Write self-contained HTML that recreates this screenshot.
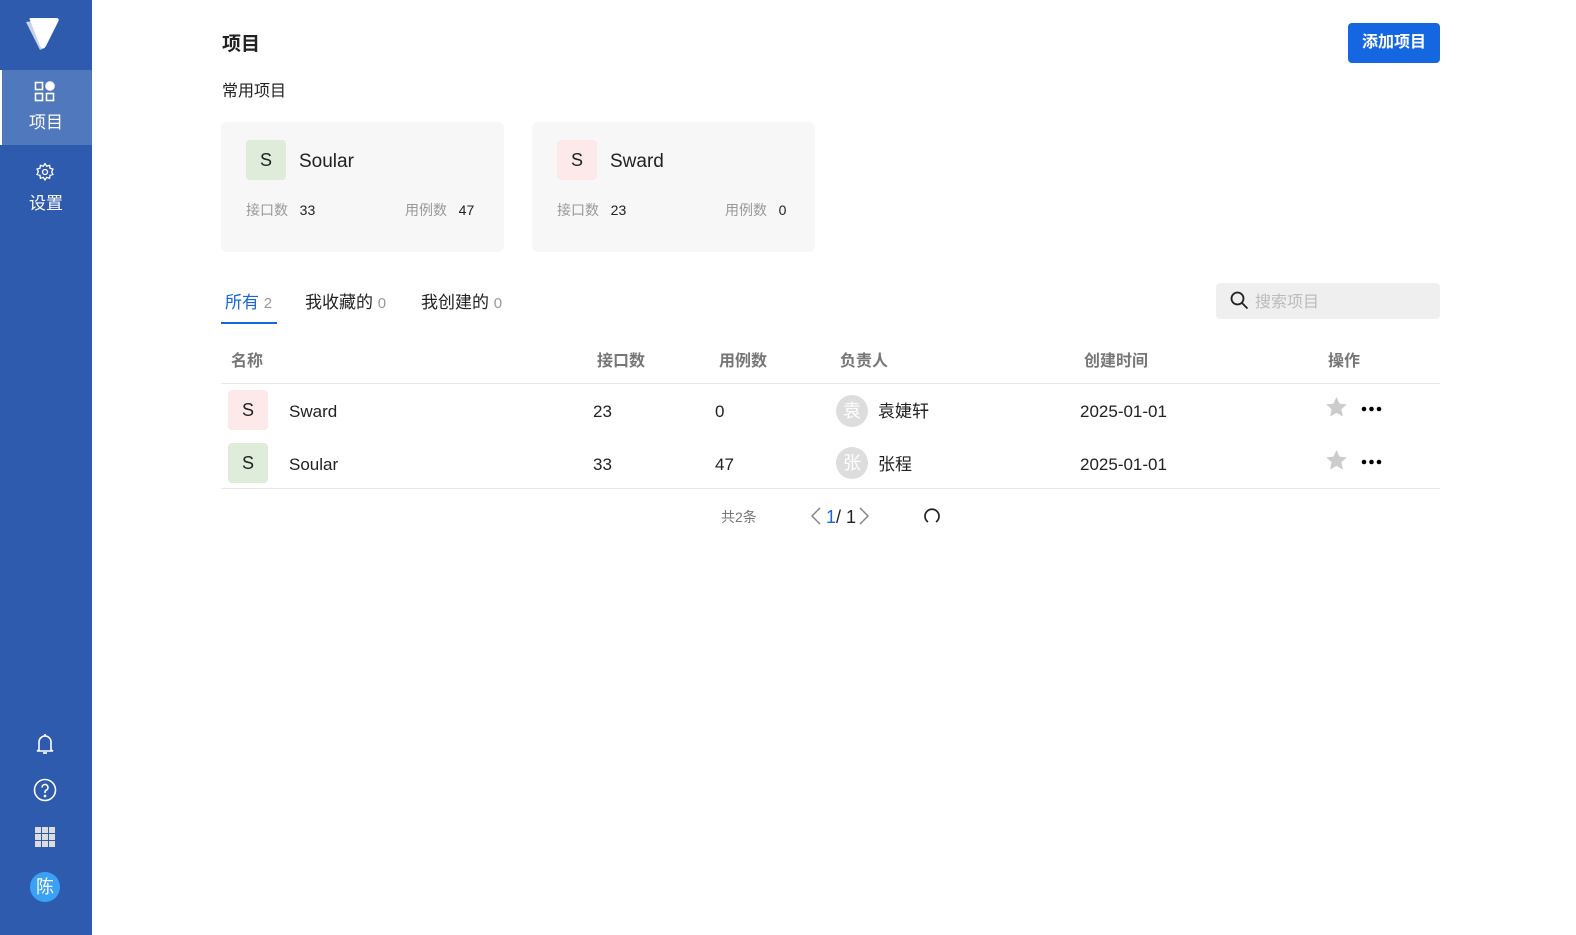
<!DOCTYPE html>
<html><head><meta charset="utf-8"><style>
*{margin:0;padding:0;box-sizing:border-box}
body{width:1576px;height:935px;background:#fff;font-family:"Liberation Sans","Noto Sans CJK SC",sans-serif;color:#222;position:relative;overflow:hidden;line-height:1.2}
.abs{position:absolute}
.side{left:0;top:0;width:92px;height:935px;background:#2e5bae}
.act{left:0;top:70px;width:92px;height:75px;background:#5079bd;border-left:2px solid #fff}
.sl{color:#fff;font-size:17px;width:92px;text-align:center;line-height:20px}
.card{background:#f7f7f7;border-radius:6px;width:283px;height:130px;top:122px}
.av{width:40px;height:40px;border-radius:4px;text-align:center;line-height:40px;font-size:18px;color:#222}
.g{background:#deecd9}.p{background:#fde8ea}
.gray{color:#999}
.th{color:#777;font-size:16px;font-weight:bold;top:352px;line-height:20px}
.td{font-size:17px;line-height:20px}
.circ{width:32px;height:32px;border-radius:50%;background:#ddd;color:#fff;text-align:center;line-height:32px;font-size:18px}
</style></head><body>
<div class="abs side"></div>
<svg class="abs" style="left:24px;top:16px" width="38" height="36" viewBox="0 0 38 36"><path d="M2 6 L16 34 L20 32 L8 5Z" fill="#c5d2ea"/><path d="M6 4 Q4 2 8 2 L32 2 Q36 2 34 6 L22 30 Q19 35 16 30Z" fill="#fff"/></svg>
<div class="abs act"></div>
<svg class="abs" style="left:34px;top:81px" width="22" height="22" viewBox="0 0 22 22" fill="none" stroke="#fff" stroke-width="1.6"><rect x="1.5" y="1.5" width="7" height="7"/><rect x="1.5" y="12.5" width="7" height="7"/><rect x="12.5" y="12.5" width="7" height="7"/><circle cx="16" cy="5" r="4" fill="#fff"/></svg>
<div class="abs sl" style="top:113px">项目</div>
<svg class="abs" style="left:35px;top:162px" width="20" height="20" viewBox="0 0 24 24" fill="none" stroke="#fff" stroke-width="1.6"><circle cx="12" cy="12" r="3"/><path d="M12 2l2 3 3.5-1 .5 3.5 3.5 1-1.5 3.5 1.5 3-3.5 1-.5 3.5-3.5-1-2 3-2-3-3.5 1-.5-3.5-3.5-1 1.5-3.5L2.5 8.5 6 7.5 6.5 4 10 5z"/></svg>
<div class="abs sl" style="top:194px">设置</div>
<svg class="abs" style="left:35px;top:732px" width="20" height="24" viewBox="0 0 20 24" fill="none" stroke="#fff" stroke-width="1.6"><path d="M4 18V10a6 6 0 0 1 12 0v8l2 1H2z"/><path d="M8 21h4"/><path d="M10 2v2"/></svg>
<svg class="abs" style="left:33px;top:778px" width="24" height="24" viewBox="0 0 24 24" fill="none" stroke="#fff" stroke-width="1.6"><circle cx="12" cy="12" r="10.5"/><path d="M9 9.5a3 3 0 1 1 4 2.8c-.8.4-1 1-1 2v.7"/><circle cx="12" cy="18" r=".6" fill="#fff"/></svg>
<svg class="abs" style="left:35px;top:827px" width="20" height="20" viewBox="0 0 20 20" fill="#ddd"><rect x="0" y="0" width="6" height="6"/><rect x="7" y="0" width="6" height="6"/><rect x="14" y="0" width="6" height="6"/><rect x="0" y="7" width="6" height="6"/><rect x="7" y="7" width="6" height="6"/><rect x="14" y="7" width="6" height="6"/><rect x="0" y="14" width="6" height="6"/><rect x="7" y="14" width="6" height="6"/><rect x="14" y="14" width="6" height="6"/></svg>
<div class="abs" style="left:30px;top:872px;width:30px;height:30px;border-radius:50%;background:#3aa1f5;color:#fff;text-align:center;line-height:30px;font-size:18px">陈</div>

<div class="abs" style="left:222px;top:34px;font-size:19px;font-weight:bold;line-height:22px">项目</div>
<div class="abs" style="left:1348px;top:23px;width:92px;height:40px;background:#1467e0;border-radius:4px;color:#fff;font-weight:bold;font-size:16px;text-align:center;line-height:40px">添加项目</div>
<div class="abs" style="left:222px;top:82px;font-size:16px;line-height:20px">常用项目</div>

<div class="abs card" style="left:221px"></div>
<div class="abs av g" style="left:246px;top:140px">S</div>
<div class="abs" style="left:299px;top:151px;font-size:19px;line-height:22px">Soular</div>
<div class="abs" style="left:246px;top:201px;font-size:14px;line-height:18px"><span class="gray">接口数</span>&nbsp;&nbsp;&nbsp;33</div>
<div class="abs" style="left:405px;top:201px;font-size:14px;line-height:18px"><span class="gray">用例数</span>&nbsp;&nbsp;&nbsp;47</div>

<div class="abs card" style="left:532px"></div>
<div class="abs av p" style="left:557px;top:140px">S</div>
<div class="abs" style="left:610px;top:151px;font-size:19px;line-height:22px">Sward</div>
<div class="abs" style="left:557px;top:201px;font-size:14px;line-height:18px"><span class="gray">接口数</span>&nbsp;&nbsp;&nbsp;23</div>
<div class="abs" style="left:725px;top:201px;font-size:14px;line-height:18px"><span class="gray">用例数</span>&nbsp;&nbsp;&nbsp;0</div>

<div class="abs" style="left:225px;top:293px;font-size:17px;color:#1467e0;line-height:20px">所有 <span class="gray" style="font-size:15px">2</span></div>
<div class="abs" style="left:221px;top:322px;width:56px;height:2px;background:#1467e0"></div>
<div class="abs" style="left:305px;top:293px;font-size:17px;line-height:20px">我收藏的 <span class="gray" style="font-size:15px">0</span></div>
<div class="abs" style="left:421px;top:293px;font-size:17px;line-height:20px">我创建的 <span class="gray" style="font-size:15px">0</span></div>
<div class="abs" style="left:1216px;top:283px;width:224px;height:36px;background:#efefef;border-radius:4px"></div>
<svg class="abs" style="left:1230px;top:291px" width="19" height="19" viewBox="0 0 19 19" fill="none" stroke="#222" stroke-width="1.8"><circle cx="7.5" cy="7.5" r="6"/><path d="M12 12l5.5 5.5"/></svg>
<div class="abs" style="left:1255px;top:293px;font-size:16px;color:#bbb;line-height:20px">搜索项目</div>

<div class="abs th" style="left:231px">名称</div>
<div class="abs th" style="left:597px">接口数</div>
<div class="abs th" style="left:719px">用例数</div>
<div class="abs th" style="left:840px">负责人</div>
<div class="abs th" style="left:1084px">创建时间</div>
<div class="abs th" style="left:1328px">操作</div>
<div class="abs" style="left:221px;top:383px;width:1219px;height:1px;background:#e8e8e8"></div>

<div class="abs av p" style="left:228px;top:390px">S</div>
<div class="abs td" style="left:289px;top:402px">Sward</div>
<div class="abs td" style="left:593px;top:402px">23</div>
<div class="abs td" style="left:715px;top:402px">0</div>
<div class="abs circ" style="left:836px;top:395px">袁</div>
<div class="abs td" style="left:878px;top:402px">袁婕轩</div>
<div class="abs td" style="left:1080px;top:402px">2025-01-01</div>

<div class="abs av g" style="left:228px;top:443px">S</div>
<div class="abs td" style="left:289px;top:455px">Soular</div>
<div class="abs td" style="left:593px;top:455px">33</div>
<div class="abs td" style="left:715px;top:455px">47</div>
<div class="abs circ" style="left:836px;top:447px">张</div>
<div class="abs td" style="left:878px;top:455px">张程</div>
<div class="abs td" style="left:1080px;top:455px">2025-01-01</div>

<svg class="abs" style="left:1325px;top:396px" width="23" height="22" viewBox="0 0 24 23"><path d="M12 1l3.2 7 7.6.8-5.7 5.1 1.6 7.5L12 17.6 5.3 21.4l1.6-7.5L1.2 8.8 8.8 8z" fill="#ccc"/></svg>
<svg class="abs" style="left:1325px;top:449px" width="23" height="22" viewBox="0 0 24 23"><path d="M12 1l3.2 7 7.6.8-5.7 5.1 1.6 7.5L12 17.6 5.3 21.4l1.6-7.5L1.2 8.8 8.8 8z" fill="#ccc"/></svg>
<svg class="abs" style="left:1361px;top:406px" width="22" height="6"><circle cx="3" cy="3" r="2.3"/><circle cx="10.5" cy="3" r="2.3"/><circle cx="18" cy="3" r="2.3"/></svg>
<svg class="abs" style="left:1361px;top:459px" width="22" height="6"><circle cx="3" cy="3" r="2.3"/><circle cx="10.5" cy="3" r="2.3"/><circle cx="18" cy="3" r="2.3"/></svg>
<div class="abs" style="left:221px;top:488px;width:1219px;height:1px;background:#e8e8e8"></div>

<div class="abs" style="left:721px;top:508px;font-size:14px;color:#777;line-height:18px">共2条</div>
<svg class="abs" style="left:810px;top:507px" width="12" height="18" viewBox="0 0 12 18" fill="none" stroke="#888" stroke-width="1.5"><path d="M10 1L2 9l8 8"/></svg>
<div class="abs" style="left:826px;top:507px;font-size:18px;line-height:20px"><span style="color:#1467e0">1</span>/ 1</div>
<svg class="abs" style="left:858px;top:507px" width="12" height="18" viewBox="0 0 12 18" fill="none" stroke="#888" stroke-width="1.5"><path d="M2 1l8 8-8 8"/></svg>
<svg class="abs" style="left:923px;top:507px" width="18" height="18" viewBox="0 0 18 18" fill="none" stroke="#222" stroke-width="1.7"><path d="M5 15A7 7 0 1 1 13 15"/></svg>
</body></html>
